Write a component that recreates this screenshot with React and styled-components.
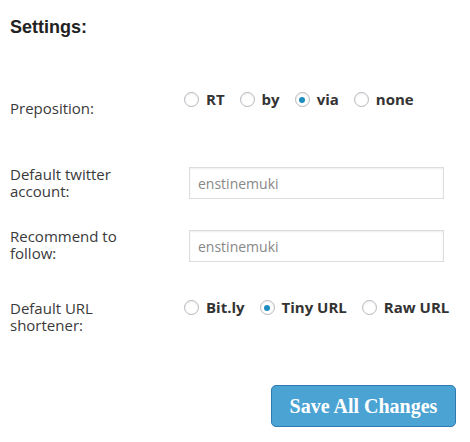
import React, { useState } from 'react'
import styled, { createGlobalStyle } from 'styled-components'

const GlobalStyle = createGlobalStyle`
  html, body {
    margin: 0;
    padding: 0;
    background: #fff;
  }
  body {
    font-family: 'Open Sans', 'Liberation Sans', sans-serif;
    color: #333;
  }
`

const Page = styled.div`
  width: 470px;
  padding: 17px 14px 0 10px;
  box-sizing: border-box;
`

const Title = styled.h3`
  margin: 0;
  font-family: 'Liberation Sans', Arial, sans-serif;
  font-size: 18px;
  font-weight: 700;
  line-height: 21px;
  color: #222;
`

const Row = styled.div`
  display: grid;
  grid-template-columns: 174px 1fr;
  align-items: start;
  margin-top: ${(p) => p.$top}px;
`

const Label = styled.label`
  font-size: 15px;
  line-height: 17px;
  color: #3a3a3a;
  padding-top: ${(p) => p.$offset || 0}px;
  width: 140px;
`

const RadioGroup = styled.div`
  display: flex;
  align-items: center;
  gap: 15px;
  padding-top: ${(p) => p.$offset || 0}px;
`

const RadioOption = styled.label`
  display: flex;
  align-items: center;
  gap: 7px;
  font-size: 15px;
  font-weight: 700;
  line-height: 17px;
  color: #333;
  cursor: pointer;
`

const Circle = styled.span`
  width: 15px;
  height: 15px;
  box-sizing: border-box;
  border-radius: 50%;
  border: 1px solid #b4b9be;
  background: #fff;
  box-shadow: inset 0 1px 2px rgba(0, 0, 0, 0.08);
  display: flex;
  align-items: center;
  justify-content: center;

  &::after {
    content: '';
    width: 6px;
    height: 6px;
    border-radius: 50%;
    background: ${(p) => (p.$checked ? '#1e8cbe' : 'transparent')};
  }
`

const TextInput = styled.input`
  margin: ${(p) => p.$offset || 0}px 0 0 5px;
  width: 255px;
  height: 32px;
  box-sizing: border-box;
  border: 1px solid #ddd;
  box-shadow: inset 0 1px 2px rgba(0, 0, 0, 0.07);
  padding: 0 8px;
  font-family: 'Open Sans', sans-serif;
  font-size: 14px;
  color: #888;
  outline: none;
`

const Footer = styled.div`
  display: flex;
  justify-content: flex-end;
  margin-top: 51px;
`

const SaveButton = styled.button`
  width: 185px;
  height: 42px;
  border: 1px solid #2e7ab2;
  border-radius: 5px;
  background: #4ba3d3;
  color: #fff;
  font-family: 'Liberation Serif', Georgia, serif;
  font-size: 20px;
  font-weight: 700;
  padding: 0;
  cursor: pointer;
`

const Radios = ({ options, value, onChange, offset }) => (
  <RadioGroup $offset={offset}>
    {options.map((o) => (
      <RadioOption key={o} onClick={() => onChange(o)}>
        <Circle $checked={value === o} />
        {o}
      </RadioOption>
    ))}
  </RadioGroup>
)

const App = () => {
  const [prep, setPrep] = useState('via')
  const [shortener, setShortener] = useState('Tiny URL')

  return (
    <Page>
      <GlobalStyle />
      <Title>Settings:</Title>

      <Row $top={53}>
        <Label $offset={9}>Preposition:</Label>
        <Radios
          options={['RT', 'by', 'via', 'none']}
          value={prep}
          onChange={setPrep}
        />
      </Row>

      <Row $top={49}>
        <Label>Default twitter account:</Label>
        <TextInput $offset={1} defaultValue='enstinemuki' />
      </Row>

      <Row $top={28}>
        <Label>Recommend to follow:</Label>
        <TextInput $offset={2} defaultValue='enstinemuki' />
      </Row>

      <Row $top={37}>
        <Label $offset={1}>Default URL shortener:</Label>
        <Radios
          options={['Bit.ly', 'Tiny URL', 'Raw URL']}
          value={shortener}
          onChange={setShortener}
        />
      </Row>

      <Footer>
        <SaveButton>Save All Changes</SaveButton>
      </Footer>
    </Page>
  )
}

export default App
